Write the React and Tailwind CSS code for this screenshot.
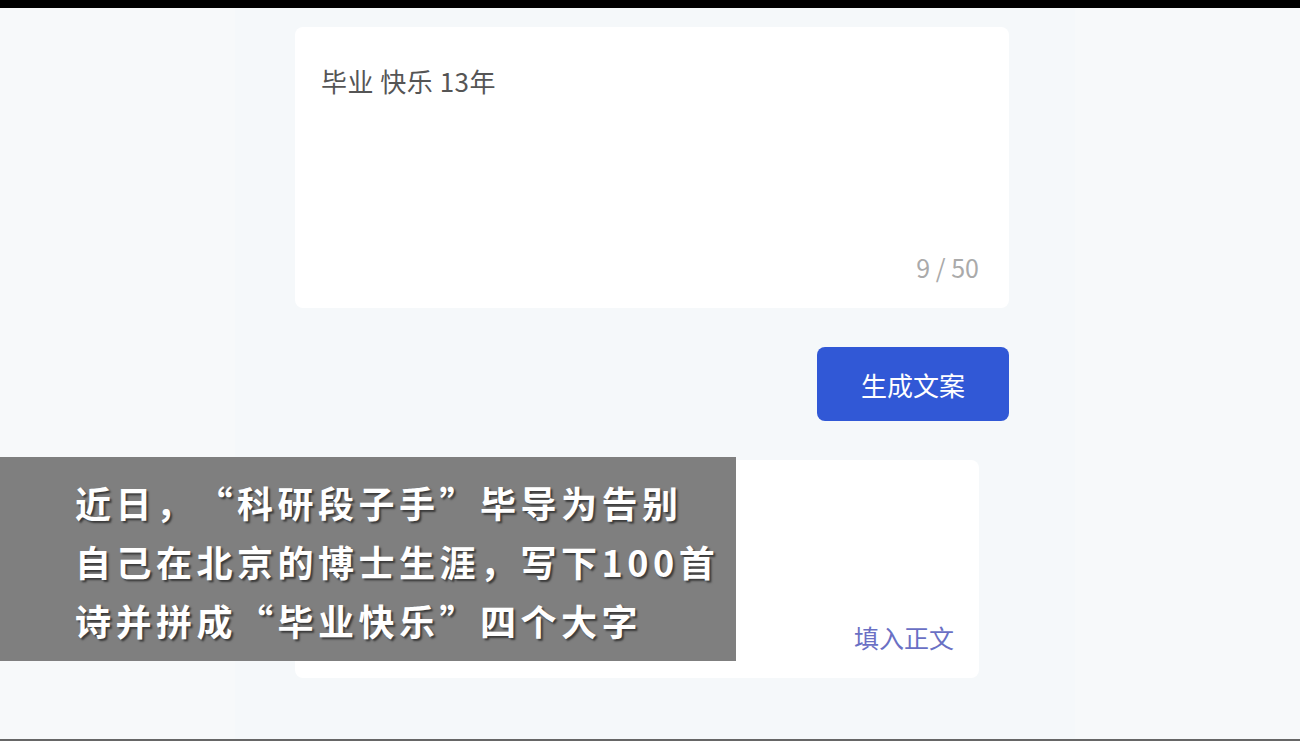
const cjk = { fontFamily: '"Noto Sans CJK SC", "Noto Sans", sans-serif' };

const subtitle = [
  "近日，“科研段子手”毕导为告别",
  "自己在北京的博士生涯，写下100首",
  "诗并拼成“毕业快乐”四个大字",
];

export default function App() {
  return (
    <div lang="zh-CN" className="h-[741px] w-[1300px] flex flex-col bg-[#f7f9fa] overflow-hidden" style={cjk}>
      <div className="h-[8px] bg-black shrink-0" />

      <div className="relative flex-1 flex">
        <div className="w-[235px] shrink-0" />
        {/* main column */}
        <div className="w-[840px] bg-[#f5f8fa] pt-[19px] pl-[60px] pr-[66px]">
          <div className="h-[281px] rounded-lg bg-white flex flex-col justify-between pl-[26px] pr-[30px] pt-[37px] pb-[24px]">
            <div className="text-[26px] leading-[34px] tracking-[0.5px] text-[#555]">毕业 快乐 13年</div>
            <div className="self-end text-[25px] leading-[34px] text-[#aaa]">9 / 50</div>
          </div>

          <div className="flex justify-end mt-[39px]">
            <button className="w-[192px] h-[74px] rounded-lg bg-[#3158d6] text-white text-[26px]">
              生成文案
            </button>
          </div>

          <div className="mt-[39px] mr-[30px] h-[218px] rounded-lg bg-white flex items-end justify-end pr-[25px] pb-[24px]">
            <span className="text-[25px] leading-[34px] text-[#6a70c4]">填入正文</span>
          </div>
        </div>
        <div className="flex-1" />

        {/* subtitle overlay */}
        <div className="absolute left-0 top-[449px] w-[736px] h-[204px] bg-[#7f7f7f] pl-[75px] pt-[16px]">
          {subtitle.map((line) => (
            <div
              key={line}
              className="text-white font-bold text-[36px] leading-[59px] tracking-[4.5px] whitespace-nowrap [text-spacing-trim:space-all] [text-shadow:2px_2px_2px_rgba(0,0,0,0.55)]"
            >
              {line}
            </div>
          ))}
        </div>
      </div>

      <div className="h-[2px] bg-[#666] shrink-0" />
    </div>
  );
}
